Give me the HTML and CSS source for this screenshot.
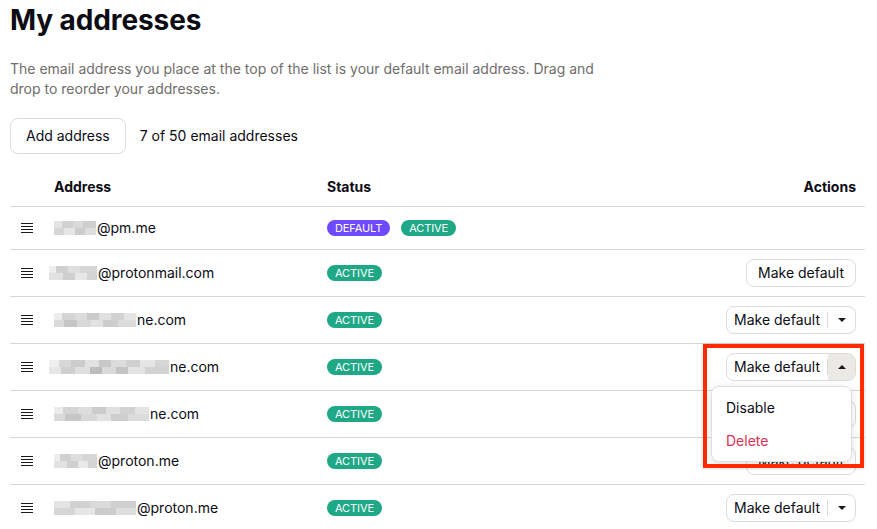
FILE: index.html
```html
<!DOCTYPE html>
<html lang="en">
<head>
<meta charset="utf-8">
<title>My addresses</title>
<link rel="stylesheet" href="styles.css">
</head>
<body>
<main class="page">
  <h1 class="title">My addresses</h1>
  <p class="desc">The email address you place at the top of the list is your default email address. Drag and drop to reorder your addresses.</p>
  <div class="toolbar">
    <button class="btn btn-lg">Add address</button>
    <span class="count">7 of 50 email addresses</span>
  </div>

  <div class="table">
    <div class="row head">
      <div class="cell"></div>
      <div class="cell th">Address</div>
      <div class="cell th">Status</div>
      <div class="cell th right">Actions</div>
    </div>

    <div class="row first">
      <div class="cell handle"><span class="grip"></span></div>
      <div class="cell addr"><span class="blur b1" style="width:42px"></span>@pm.me</div>
      <div class="cell status"><span class="badge purple">Default</span><span class="badge green">Active</span></div>
      <div class="cell right"></div>
    </div>

    <div class="row">
      <div class="cell handle"><span class="grip"></span></div>
      <div class="cell addr"><span class="blur b2 shift" style="width:48px"></span>@protonmail.com</div>
      <div class="cell status"><span class="badge green">Active</span></div>
      <div class="cell right"><button class="btn btn-sm">Make default</button></div>
    </div>

    <div class="row">
      <div class="cell handle"><span class="grip"></span></div>
      <div class="cell addr"><span class="blur b3" style="width:82px"></span>ne.com</div>
      <div class="cell status"><span class="badge green">Active</span></div>
      <div class="cell right">
        <div class="split"><span class="split-main">Make default</span><span class="split-caret"><span class="caret down"></span></span></div>
      </div>
    </div>

    <div class="row">
      <div class="cell handle"><span class="grip"></span></div>
      <div class="cell addr"><span class="blur b4 shift" style="width:120px"></span>ne.com</div>
      <div class="cell status"><span class="badge green">Active</span></div>
      <div class="cell right menu-host">
        <div class="split"><span class="split-main">Make default</span><span class="split-caret open"><span class="caret up"></span></span></div>
        <div class="dropdown">
          <div class="item">Disable</div>
          <div class="item danger">Delete</div>
        </div>
      </div>
    </div>

    <div class="row">
      <div class="cell handle"><span class="grip"></span></div>
      <div class="cell addr"><span class="blur b3" style="width:95px"></span>ne.com</div>
      <div class="cell status"><span class="badge green">Active</span></div>
      <div class="cell right">
        <div class="split"><span class="split-main">Make default</span><span class="split-caret"><span class="caret down"></span></span></div>
      </div>
    </div>

    <div class="row">
      <div class="cell handle"><span class="grip"></span></div>
      <div class="cell addr"><span class="blur b2" style="width:43px"></span>@proton.me</div>
      <div class="cell status"><span class="badge green">Active</span></div>
      <div class="cell right"><button class="btn btn-sm">Make default</button></div>
    </div>

    <div class="row">
      <div class="cell handle"><span class="grip"></span></div>
      <div class="cell addr"><span class="blur b1" style="width:82px"></span>@proton.me</div>
      <div class="cell status"><span class="badge green">Active</span></div>
      <div class="cell right">
        <div class="split"><span class="split-main">Make default</span><span class="split-caret"><span class="caret down"></span></span></div>
      </div>
    </div>
  </div>

  <div class="highlight"></div>
</main>
</body>
</html>
```

FILE: styles.css
```css
* { box-sizing: border-box; }
html, body { margin: 0; padding: 0; background: #fff; }
body {
  font-family: Inter, "Noto Sans", "Liberation Sans", sans-serif;
  color: #0c0c14;
  font-size: 14px;
  line-height: 20px;
  overflow: hidden;
}
.page {
  position: relative;
  padding: 0 12px 0 10px;
}
.title {
  margin: 0;
  padding-top: 3px;
  font-size: 28px;
  line-height: 34px;
  font-weight: 700;
  letter-spacing: -0.1px;
}
.desc {
  margin: 22px 0 0;
  max-width: 600px;
  color: #706d6b;
  font-size: 14px;
  line-height: 20px;
}
.toolbar {
  margin-top: 19px;
  display: flex;
  align-items: center;
  gap: 14px;
}
.btn {
  font-family: inherit;
  color: #0c0c14;
  background: #fff;
  border: 1px solid #dedbd9;
  border-radius: 8px;
  font-size: 14px;
  line-height: 20px;
  cursor: pointer;
}
.btn-lg { height: 36px; padding: 0 15px; }
.btn-sm { height: 28px; padding: 0 11px; }
.count { color: #0c0c14; }

.table { margin-top: 12px; }
.row {
  display: grid;
  grid-template-columns: 44px 273px 1fr auto;
  align-items: center;
  height: 47px;
  border-bottom: 1px solid #d9d7d5;
}
.row.head { height: 41px; }
.row.first { height: 43px; }
.cell { display: flex; align-items: center; white-space: nowrap; }
.th { font-weight: 700; padding-top: 1px; }
.right { justify-content: flex-end; padding-right: 9px; }
.handle { padding-left: 11px; }
.grip {
  display: block;
  width: 12px;
  height: 10px;
  background: linear-gradient(#1a1a1a, #1a1a1a) 0 0 / 12px 1px no-repeat,
              linear-gradient(#1a1a1a, #1a1a1a) 0 3px / 12px 1px no-repeat,
              linear-gradient(#1a1a1a, #1a1a1a) 0 6px / 12px 1px no-repeat,
              linear-gradient(#1a1a1a, #1a1a1a) 0 9px / 12px 1px no-repeat;
}
.addr { font-size: 14px; }
.blur {
  display: inline-block;
  height: 14px;
  margin-right: 1px;
  background-color: #dcdcdc;
}
.blur.shift { margin-left: -5px; }
.b1 {
  background-image:
    linear-gradient(90deg, #e4e4e4 0 20%, #d2d2d2 20% 45%, #dadada 45% 70%, #cfcfcf 70% 100%),
    linear-gradient(90deg, #d6d6d6 0 25%, #e6e6e6 25% 50%, #cccccc 50% 75%, #dedede 75% 100%);
  background-size: 100% 7px, 100% 7px;
  background-position: 0 0, 0 7px;
  background-repeat: no-repeat;
}
.b2 {
  background-image:
    linear-gradient(90deg, #ededed 0 15%, #d0d0d0 15% 40%, #dedede 40% 65%, #d6d6d6 65% 100%),
    linear-gradient(90deg, #e2e2e2 0 30%, #cfcfcf 30% 55%, #e8e8e8 55% 80%, #d4d4d4 80% 100%);
  background-size: 100% 7px, 100% 7px;
  background-position: 0 0, 0 7px;
  background-repeat: no-repeat;
}
.b3 {
  background-image:
    linear-gradient(90deg, #ececec 0 10%, #d4d4d4 10% 25%, #dddddd 25% 40%, #cbcbcb 40% 55%, #e0e0e0 55% 70%, #d2d2d2 70% 85%, #e4e4e4 85% 100%),
    linear-gradient(90deg, #dadada 0 12%, #c6c6c6 12% 28%, #d8d8d8 28% 45%, #e2e2e2 45% 60%, #cdcdcd 60% 78%, #dcdcdc 78% 100%);
  background-size: 100% 7px, 100% 7px;
  background-position: 0 0, 0 7px;
  background-repeat: no-repeat;
}
.b4 {
  background-image:
    linear-gradient(90deg, #f0f0f0 0 8%, #d8d8d8 8% 18%, #cccccc 18% 30%, #e2e2e2 30% 42%, #c8c8c8 42% 52%, #dcdcdc 52% 64%, #d0d0d0 64% 76%, #e6e6e6 76% 88%, #d6d6d6 88% 100%),
    linear-gradient(90deg, #e6e6e6 0 10%, #cfcfcf 10% 22%, #e0e0e0 22% 34%, #bdbdbd 34% 44%, #dadada 44% 56%, #c4c4c4 56% 66%, #e4e4e4 66% 80%, #d2d2d2 80% 100%);
  background-size: 100% 7px, 100% 7px;
  background-position: 0 0, 0 7px;
  background-repeat: no-repeat;
}

.status { gap: 11px; }
.badge {
  display: inline-flex;
  align-items: center;
  height: 16px;
  padding: 0 8px;
  border-radius: 8px;
  color: #fff;
  font-size: 11px;
  line-height: 16px;
  text-transform: uppercase;
  letter-spacing: -0.1px;
}
.purple { background: #6d4aff; }
.green { background: #1ea885; }

.split {
  display: flex;
  align-items: center;
  height: 28px;
  border: 1px solid #dedbd9;
  border-radius: 8px;
  background: #fff;
}
.split-main {
  padding: 0 7px 0 7px;
  line-height: 20px;
  border-right: 1px solid #dedbd9;
  height: 16px;
  display: flex;
  align-items: center;
}
.split-caret {
  width: 27px;
  height: 26px;
  display: flex;
  align-items: center;
  justify-content: center;
}
.split-caret.open {
  background: #ebe9e6;
  border-radius: 0 7px 7px 0;
  margin: 0;
}
.caret {
  width: 0;
  height: 0;
  border-left: 4px solid transparent;
  border-right: 4px solid transparent;
}
.caret.down { border-top: 4px solid #1a1a1a; }
.caret.up { border-bottom: 4px solid #1a1a1a; }

.menu-host { position: relative; }
.dropdown {
  position: absolute;
  top: 33px;
  right: 13px;
  width: 141px;
  padding: 4px 0;
  background: #fff;
  border: 1px solid #e2e0de;
  border-radius: 8px;
  box-shadow: 0 2px 8px rgba(0, 0, 0, 0.12);
  z-index: 2;
}
.item {
  height: 33px;
  display: flex;
  align-items: center;
  padding-left: 14px;
}
.item.danger { color: #dc3251; }

.highlight {
  position: absolute;
  left: 703px;
  top: 344px;
  width: 161px;
  height: 124px;
  border: 4px solid #ff2a00;
  box-shadow: 0 0 4px rgba(0, 0, 0, 0.15);
  pointer-events: none;
  z-index: 3;
}
```
